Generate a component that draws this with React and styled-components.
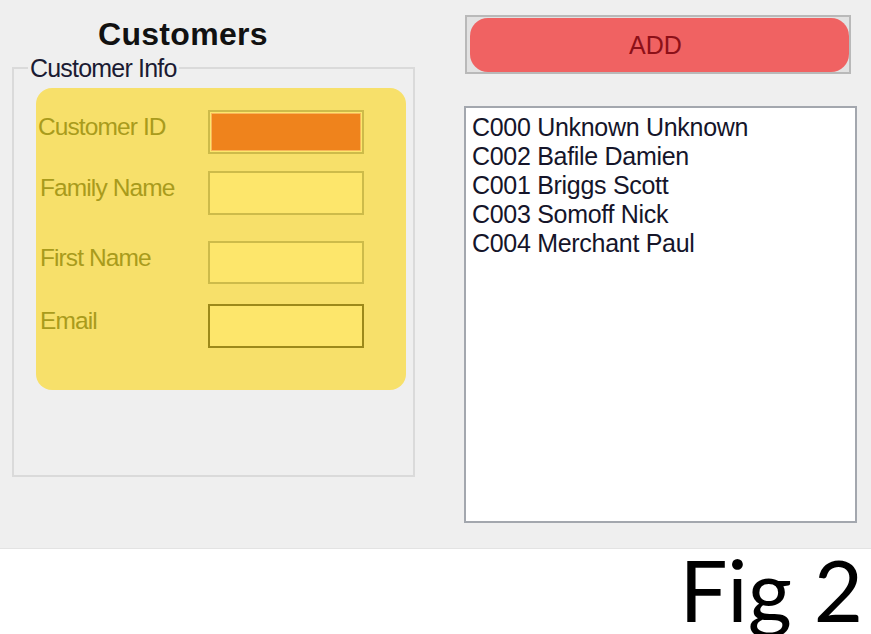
import React from 'react';
import styled, { createGlobalStyle } from 'styled-components';

const Global = createGlobalStyle`
  html, body { margin: 0; padding: 0; background: #fff; overflow: hidden; }
  body { font-family: "Liberation Sans", Arial, sans-serif; }
  * { box-sizing: border-box; }
`;

const Window = styled.div`
  height: 549px;
  background: #efefef;
  border-bottom: 1px solid #e3e3e3;
  display: flex;
  padding-left: 12px;
`;

const LeftColumn = styled.div`
  width: 403px;
  display: flex;
  flex-direction: column;
`;

const Title = styled.h1`
  margin: 16px 0 4px 86px;
  font-size: 32px;
  line-height: 36px;
  font-weight: 700;
  letter-spacing: 0.3px;
  color: #111;
`;

const GroupBox = styled.fieldset`
  margin: 0;
  width: 403px;
  height: 421px;
  border: 2px solid #dadada;
  padding: 8px 0 0 0;
  min-width: 0;
`;

const Legend = styled.legend`
  margin-left: 14px;
  padding: 0 2px;
  font-size: 25px;
  line-height: 24px;
  letter-spacing: -0.8px;
  color: #1b1b33;
`;

const Panel = styled.div`
  margin-left: 22px;
  width: 370px;
  height: 302px;
  background: #f7e06a;
  border-radius: 16px;
  padding: 22px 0 0 2px;
  display: flex;
  flex-direction: column;
`;

const Row = styled.div`
  display: flex;
  align-items: flex-start;
  margin-top: ${p => p.$gap || 0}px;
`;

const Label = styled.label`
  width: 170px;
  padding-top: 5px;
  padding-left: ${p => p.$indent || 0}px;
  font-size: 24.5px;
  line-height: 24px;
  letter-spacing: -0.9px;
  color: #a99b1c;
`;

const Field = styled.div`
  width: 156px;
  height: ${p => p.$h || 44}px;
  border: 2px solid ${p => (p.$strong ? '#9c891a' : '#cdbb4a')};
  background: ${p => (p.$active ? '#ef831c' : '#fde66b')};
  box-shadow: ${p =>
    p.$active ? 'inset 0 0 0 1px #fde66b, inset 0 0 0 2px #f8b55a' : 'none'};
`;

const RightColumn = styled.div`
  margin-left: 49px;
  width: 393px;
  display: flex;
  flex-direction: column;
`;

const ButtonFrame = styled.div`
  margin: 15px 0 0 1px;
  width: 386px;
  height: 59px;
  border: 2px solid #b9b9b9;
  background: #e2e2e2;
  padding: 1px 0 0 3px;
  display: flex;
`;

const AddButton = styled.button`
  width: 379px;
  height: 54px;
  border: none;
  border-radius: 18px;
  background: #f06262;
  color: #8c1018;
  font-family: "Liberation Sans", Arial, sans-serif;
  font-size: 25px;
  padding: 0 8px 0 0;
  cursor: pointer;
`;

const ListBox = styled.ul`
  margin: 32px 0 0 0;
  width: 393px;
  height: 417px;
  border: 2px solid #a3a7ae;
  background: #fff;
  padding: 5px 0 0 6px;
  list-style: none;
`;

const ListItem = styled.li`
  font-size: 25px;
  line-height: 29px;
  letter-spacing: -0.3px;
  color: #15152a;
  white-space: nowrap;
`;

const Footer = styled.div`
  height: 85px;
  padding-right: 8px;
  text-align: right;
  font-family: Lato, "Open Sans", sans-serif;
  font-size: 85px;
  line-height: 80px;
  color: #000;
`;

const fields = [
  { label: 'Customer ID', gap: 0, active: true },
  { label: 'Family Name', gap: 17, indent: 2 },
  { label: 'First Name', gap: 26, h: 43, indent: 2 },
  { label: 'Email', gap: 20, strong: true, indent: 2 },
];

const customers = [
  'C000 Unknown Unknown',
  'C002 Bafile Damien',
  'C001 Briggs Scott',
  'C003 Somoff Nick',
  'C004 Merchant Paul',
];

export default function App() {
  return (
    <>
      <Global />
      <Window>
        <LeftColumn>
          <Title>Customers</Title>
          <GroupBox>
            <Legend>Customer Info</Legend>
            <Panel>
              {fields.map(f => (
                <Row key={f.label} $gap={f.gap}>
                  <Label $indent={f.indent}>{f.label}</Label>
                  <Field $active={f.active} $strong={f.strong} $h={f.h} />
                </Row>
              ))}
            </Panel>
          </GroupBox>
        </LeftColumn>
        <RightColumn>
          <ButtonFrame>
            <AddButton>ADD</AddButton>
          </ButtonFrame>
          <ListBox>
            {customers.map(c => (
              <ListItem key={c}>{c}</ListItem>
            ))}
          </ListBox>
        </RightColumn>
      </Window>
      <Footer>Fig 2</Footer>
    </>
  );
}
